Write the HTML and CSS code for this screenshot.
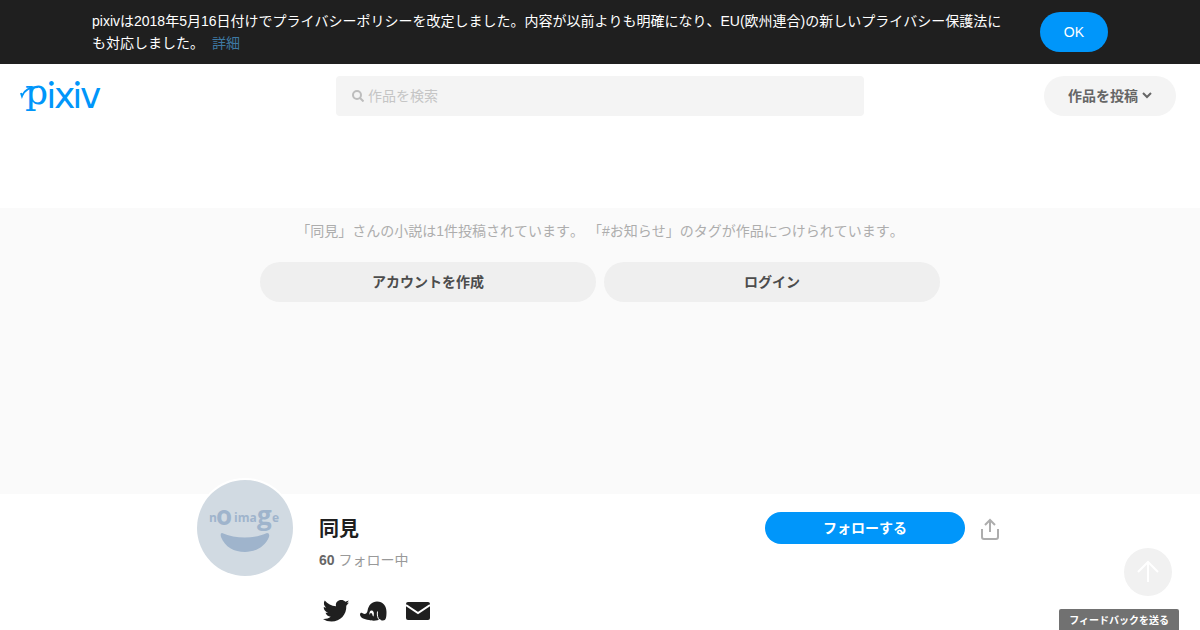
FILE: index.html
```html
<!DOCTYPE html>
<html lang="ja">
<head>
    <meta charset="UTF-8">
    <meta name="viewport" content="width=device-width, initial-scale=1.0">
    <title>同見 - pixiv</title>
    <link rel="stylesheet" href="styles.css">
</head>
<body>

    <div class="policy">
        <div class="policy-inner">
            <p class="policy-text">pixivは2018年5月16日付けでプライバシーポリシーを改定しました。内容が以前よりも明確になり、EU(欧州連合)の新しいプライバシー保護法にも対応しました。 <a href="#">詳細</a></p>
            <button class="button primary" type="button">OK</button>
        </div>
    </div>

    <header class="header">
        <a class="logo" href="#" aria-label="pixiv">
            <svg width="84" height="40" viewBox="0 0 84 40">
                <text class="logo-p" x="5" y="28">p</text>
                <text class="logo-i" x="27" y="32">i</text>
                <text class="logo-wide" x="34" y="32">x</text>
                <text class="logo-i" x="53" y="32">i</text>
                <text class="logo-wide" x="60" y="32">v</text>
                <path d="M1 17L2 20C4 15 9 11 18 11" />
            </svg>
        </a>
        <form class="search">
            <svg width="12" height="12" viewBox="0 0 12 12" aria-hidden="true">
                <circle cx="5" cy="5" r="4" />
                <path d="M8 8L11.500 11.500" />
            </svg>
            <input type="search" placeholder="作品を検索" aria-label="作品を検索">
        </form>
        <button class="button post" type="button">作品を投稿
            <svg width="10" height="8" viewBox="0 0 10 8" aria-hidden="true"><path d="M1 2L5 6L9 2" /></svg>
        </button>
    </header>

    <main>
        <section class="cover">
            <p class="cover-text">「同見」さんの小説は1件投稿されています。 「#お知らせ」のタグが作品につけられています。</p>
            <div class="cover-buttons">
                <button class="button" type="button">アカウントを作成</button>
                <button class="button" type="button">ログイン</button>
            </div>
        </section>

        <section class="profile">
            <svg class="avatar" viewBox="0 0 96 96" role="img" aria-label="no image">
                <rect width="96" height="96" fill="#d1dae2" />
                <g class="avatar-text">
                    <text x="12" y="42" font-size="12">n</text>
                    <text class="avatar-big" x="19" y="45">o</text>
                    <text x="37" y="42" font-size="12">ima</text>
                    <text class="avatar-big" x="60" y="45">g</text>
                    <text x="75" y="42" font-size="12">e</text>
                </g>
                <path d="M25 53C39 59 57 59 70 53Q73 53 72 57C68 67 58 72 48 72C37 72 28 67 24 57Q23 53 25 53Z" fill="#9fb4cc" />
            </svg>
            <div class="info">
                <h1>同見</h1>
                <p class="follow-count"><a href="#"><strong>60</strong> フォロー中</a></p>
                <div class="links">
                    <a href="#" aria-label="Twitter">
                        <svg width="28" height="24" viewBox="0 0 28 24"><path d="M27 3.500L24.300 6.700C24.700 15.500 18.500 22.500 9.500 22.500C6.500 22.500 3.300 21.700 1 20C4 20.200 6.500 19.500 8.700 17.800C6 17.500 4.300 16 3.500 13.800L6 13.700C3.300 12.800 1.700 10.800 1.700 8L4.200 8.700C1.700 6.700 1.300 3.800 2.700 1.500C5.700 5 9.300 7 14 7.200C13.200 3.500 16 1 19.200 1C21 1 22.300 1.600 23.300 2.700L26.800 1.500L25 4.200Z" /></svg>
                    </a>
                    <a class="pawoo" href="#" aria-label="Pawoo">
                        <svg width="28" height="24" viewBox="0 0 28 24">
                            <path d="M0 15.500C0 13.500 2 13.500 3 14.500C5 15.500 7 14.500 7.500 12C8.500 6 12 2.500 17 2.500C23 2.500 26.500 7 26.500 13C26.500 18 26 21.500 23 21.500C21.500 21.500 20.500 21 20 20C18 22 12 22 9 21C4 20.500 0 18.500 0 15.500Z" />
                            <path d="M17.500 12.500C17 16 17.500 19 19.500 21" fill="none" stroke="#fff" />
                            <path d="M9.500 16C9 13 10 11.500 11.500 11.500C13.500 11.500 14.500 14 13.500 17.500C12.500 17.500 12.500 14 11 14C10 14 10 15 9.500 16Z" fill="#fff" />
                        </svg>
                    </a>
                    <a href="#" aria-label="メール">
                        <svg width="24" height="24" viewBox="0 0 24 24"><rect y="3" width="24" height="18" rx="2" /><path d="M0 6L12 14L24 6" fill="none" stroke="#fff" stroke-width="2" /></svg>
                    </a>
                </div>
            </div>
            <div class="actions">
                <button class="button primary follow" type="button">フォローする</button>
                <button class="share" type="button" aria-label="共有">
                    <svg width="20" height="24" viewBox="0 0 20 24"><path d="M2 13V21Q2 23 4 23H16Q18 23 18 21V13M10 16V4M5 9L10 4L15 9" /></svg>
                </button>
            </div>
        </section>
    </main>

    <button class="to-top" type="button" aria-label="トップへ戻る">
        <svg width="24" height="24" viewBox="0 0 24 24"><path d="M12 22V2M2 12L12 2L22 12" /></svg>
    </button>
    <button class="feedback" type="button">フィードバックを送る</button>

</body>
</html>
```

FILE: styles.css
```css
body {
    margin: 0;
    background-color: #fff;
    color: #1f1f1f;
    font-family: "Liberation Sans", "Noto Sans CJK JP", sans-serif;
    font-size: 14px;
    font-kerning: none;
    line-height: 22px;
    text-spacing-trim: space-all;
}
h1, p {
    margin: 0;
}
a {
    color: inherit;
    text-decoration: none;
}
svg {
    display: block;
}
button {
    border: none;
    font-family: inherit;
    cursor: pointer;
}
.button {
    height: 40px;
    padding: 0 24px 2px;
    border-radius: 20px;
    background-color: #efefef;
    color: #4c4c4c;
    font-size: 14px;
    font-weight: bold;
}
.button.primary {
    background-color: #0096fa;
    color: #fff;
}

/* privacy policy bar */
.policy {
    background-color: #1f1f1f;
    color: #fff;
}
.policy-inner {
    display: flex;
    align-items: center;
    gap: 32px;
    max-width: 1016px;
    margin: 0 auto;
    padding: 10px 0;
}
.policy-text {
    flex: 1;
}
.policy-text a {
    margin-left: 4px;
    color: #3e79a3;
}
.policy .button {
    padding-bottom: 0;
    font-weight: normal;
}

/* header */
.header {
    display: grid;
    grid-template-columns: 1fr minmax(0, 528px) 1fr;
    align-items: center;
    height: 64px;
    padding: 0 20px;
}
.logo {
    justify-self: start;
}
.logo svg {
    overflow: visible;
}
.logo text {
    fill: #0096fa;
}
.logo-p {
    font-family: "DejaVu Serif", serif;
    font-size: 36px;
}
.logo-i {
    font-family: Lato, sans-serif;
    font-size: 36px;
}
.logo-wide {
    font-family: "DejaVu Sans", sans-serif;
    font-size: 36px;
}
.logo path {
    fill: none;
    stroke: #0096fa;
    stroke-width: 2;
}
.search {
    display: flex;
    align-items: center;
    gap: 4px;
    height: 40px;
    padding: 0 16px;
    border-radius: 4px;
    background-color: #f4f4f4;
}
.search svg {
    fill: none;
    stroke: #bdbdbd;
    stroke-width: 2;
}
.search input {
    flex: 1;
    min-width: 0;
    padding: 0;
    border: none;
    outline: none;
    background: none;
    font-family: inherit;
    font-size: 14px;
}
.search input::placeholder {
    color: #c5c5c5;
}
.post {
    display: flex;
    align-items: center;
    justify-self: end;
    gap: 4px;
    margin-right: 4px;
    background-color: #f4f4f4;
    color: #666;
}
.post svg {
    fill: none;
    stroke: #666;
    stroke-width: 2;
}

/* cover */
.cover {
    box-sizing: border-box;
    height: 286px;
    margin-top: 80px;
    padding-top: 12px;
    background-color: #fafafa;
    text-align: center;
}
.cover-text {
    color: #adadad;
}
.cover-buttons {
    display: grid;
    grid-template-columns: 1fr 1fr;
    gap: 8px;
    max-width: 680px;
    margin: 20px auto 0;
}

/* profile */
.profile {
    display: flex;
    align-items: flex-start;
    gap: 24px;
    max-width: 810px;
    margin: 0 auto;
}
.avatar {
    width: 96px;
    height: 96px;
    margin-top: -16px;
    border: 2px solid #fff;
    border-radius: 50%;
}
.avatar-text {
    fill: #9fb4cc;
    font-family: "Open Sans", sans-serif;
    font-weight: bold;
}
.avatar-big {
    font-size: 26px;
}
.info {
    flex: 1;
    padding-top: 20px;
}
.info h1 {
    font-size: 20px;
    line-height: 30px;
}
.follow-count {
    margin-top: 5px;
    color: #999;
}
.follow-count strong {
    color: #666;
}
.links {
    display: flex;
    gap: 10px;
    margin-top: 28px;
    padding-left: 3px;
}
.links svg {
    fill: #1f1f1f;
}
.links .pawoo {
    margin-right: 8px;
}
.actions {
    display: flex;
    align-items: center;
    gap: 8px;
    padding-top: 18px;
}
.follow {
    width: 200px;
    height: 32px;
}
.share {
    padding: 0 5px 0 7px;
    background: none;
}
.share svg {
    fill: none;
    stroke: #adadad;
    stroke-width: 2;
}

/* floating buttons */
.to-top {
    display: flex;
    align-items: center;
    justify-content: center;
    position: fixed;
    right: 28px;
    bottom: 34px;
    width: 48px;
    height: 48px;
    padding: 0;
    border-radius: 50%;
    background-color: #f1f1f1;
}
.to-top svg {
    fill: none;
    stroke: #fff;
    stroke-width: 2;
}
.feedback {
    position: fixed;
    right: 21px;
    bottom: 0;
    height: 21px;
    padding: 0 10px;
    border-radius: 2px 2px 0 0;
    background-color: #717171;
    color: #fff;
    font-size: 10px;
    font-weight: bold;
}
```
